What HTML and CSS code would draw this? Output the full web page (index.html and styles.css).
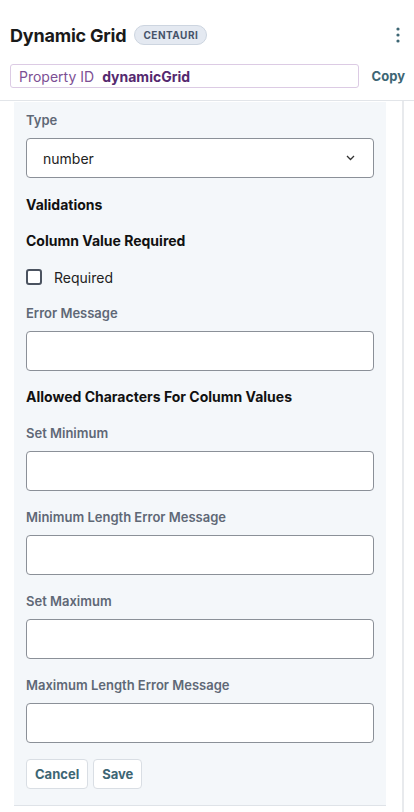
FILE: index.html
```html
<!DOCTYPE html>
<html>
<head>
<meta charset="utf-8">
<link rel="stylesheet" href="styles.css">
</head>
<body>
<header class="header">
  <div class="title-row">
    <h1 class="title">Dynamic Grid</h1>
    <span class="badge">CENTAURI</span>
    <span class="spacer"></span>
    <svg class="kebab" width="6" height="18" viewBox="0 0 6 18"><circle cx="3" cy="3" r="1.6"/><circle cx="3" cy="9" r="1.6"/><circle cx="3" cy="15" r="1.6"/></svg>
  </div>
  <div class="prop-row">
    <div class="prop-box"><span class="prop-label">Property ID</span><span class="prop-value">dynamicGrid</span></div>
    <span class="copy">Copy</span>
  </div>
</header>
<main class="main">
  <div class="panel">
    <div class="field field-first">
      <div class="label">Type</div>
      <div class="select"><span>number</span>
        <svg class="chev" width="9" height="6" viewBox="0 0 9 6"><path d="M1 1 L4.5 4.5 L8 1" fill="none" stroke="#333" stroke-width="1.3"/></svg>
      </div>
    </div>
    <div class="heading">Validations</div>
    <div class="heading">Column Value Required</div>
    <label class="check-row"><span class="checkbox"></span><span>Required</span></label>
    <div class="field"><div class="label">Error Message</div><div class="input"></div></div>
    <div class="heading">Allowed Characters For Column Values</div>
    <div class="field"><div class="label">Set Minimum</div><div class="input"></div></div>
    <div class="field"><div class="label">Minimum Length Error Message</div><div class="input"></div></div>
    <div class="field"><div class="label">Set Maximum</div><div class="input"></div></div>
    <div class="field"><div class="label">Maximum Length Error Message</div><div class="input"></div></div>
    <div class="buttons"><button class="btn">Cancel</button><button class="btn">Save</button></div>
  </div>
  <div class="track"></div>
</main>
</body>
</html>
```
FILE: styles.css
```css
* { box-sizing: border-box; }
html, body { margin: 0; padding: 0; background: #fff; }
body { font-family: Inter, "Noto Sans", sans-serif; color: #111; width: 414px; height: 812px; overflow: hidden; }

.header { padding: 20px 9px 12px 10px; }
.title-row { display: flex; align-items: center; height: 30px; }
.title { margin: 0; font-size: 18px; font-weight: 700; color: #1a1a1a; letter-spacing: -0.2px; }
.badge { margin-left: 8px; height: 20px; padding: 0 8px; border-radius: 10px; background: #e4e9f1; border: 1px solid #cdd5e0; color: #46536a; font-size: 10px; font-weight: 700; letter-spacing: 0.5px; display: flex; align-items: center; }
.spacer { flex: 1; }
.kebab { fill: #3d6674; margin-right: 4px; }

.prop-row { display: flex; align-items: center; margin-top: 14px; }
.prop-box { width: 349px; height: 24px; border: 1px solid #dccbe4; border-radius: 3px; display: flex; align-items: center; padding-left: 8px; font-size: 14px; }
.prop-label { color: #7c4f94; }
.prop-value { color: #55296f; font-weight: 700; margin-left: 8px; }
.copy { margin-left: auto; color: #3d6674; font-weight: 700; font-size: 13px; }

.main { display: flex; border-top: 1px solid #e2e5e9; height: 712px; }
.panel { width: 372px; margin: 1px 0 0 14px; background: #f4f7fa; padding: 8px 12px 16px 12px; border-bottom: 1px solid #dfe3e8; align-self: flex-start; display: flex; flex-direction: column; gap: 16px; }
.track { margin-left: 16px; width: 12px; border-left: 2px solid #e8eaed; }

.field-first { margin-bottom: 1px; }
.label { font-size: 13px; font-weight: 600; color: #5f6876; line-height: 20px; margin-bottom: 8px; }
.heading { font-size: 14px; font-weight: 700; color: #111; line-height: 20px; }
.input, .select { height: 40px; background: #fff; border: 1px solid #8b9098; border-radius: 4px; }
.select { display: flex; align-items: center; padding: 0 18px 0 16px; font-size: 14px; color: #222; }
.select span { flex: 1; }
.check-row { display: flex; align-items: center; height: 20px; font-size: 14px; color: #222; }
.checkbox { width: 16px; height: 16px; border: 2px solid #4b5360; border-radius: 3px; margin-right: 12px; background: #fff; }
.buttons { display: flex; gap: 5px; }
.btn { height: 30px; padding: 0 8px; background: #fff; border: 1px solid #d9dee4; border-radius: 4px; color: #3d6674; font-family: Inter, sans-serif; font-size: 13px; font-weight: 700; }
```
